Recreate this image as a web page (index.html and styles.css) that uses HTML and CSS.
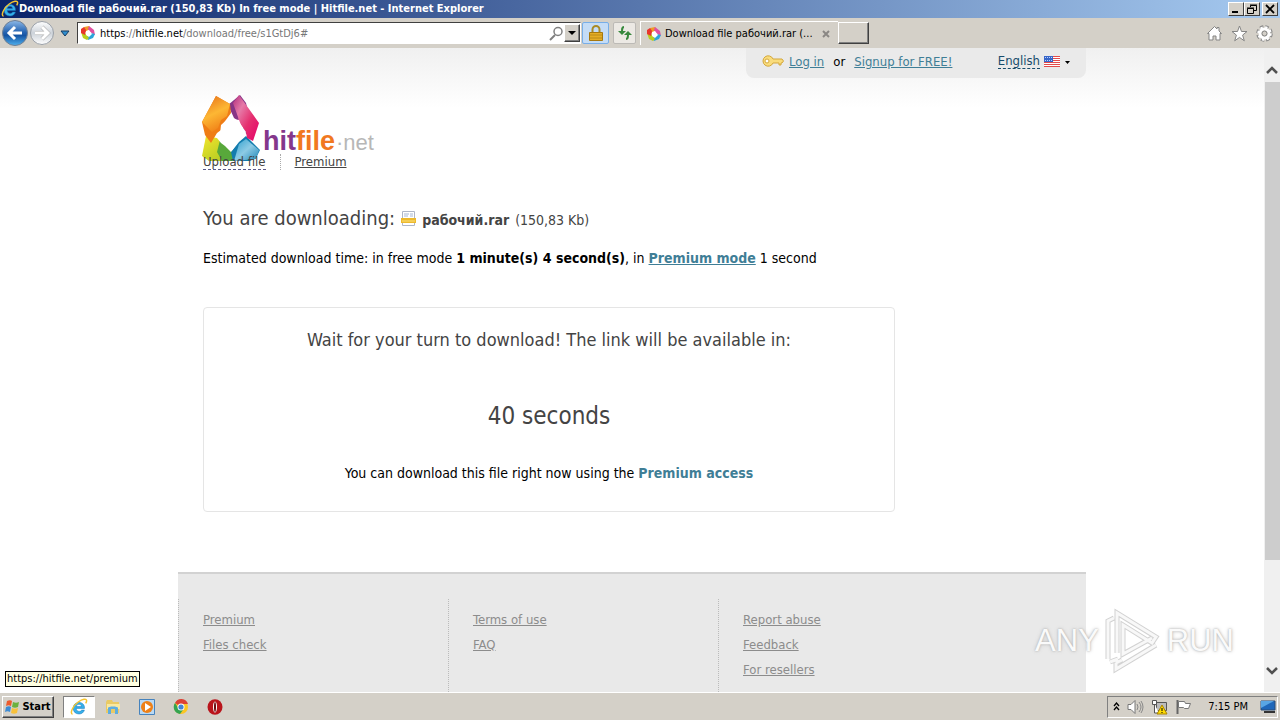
FILE: index.html
```html
<!DOCTYPE html>
<html lang="en">
<head>
  <meta charset="UTF-8">
  <title>Download file рабочий.rar (150,83 Kb) In free mode | Hitfile.net</title>
  <link rel="stylesheet" href="styles.css">
</head>
<body>
  <svg class="defs" aria-hidden="true">
    <defs>
      <linearGradient id="blue" x2="0" y2="1">
        <stop offset="0" stop-color="#8db9e8"/><stop offset=".45" stop-color="#2866b3"/><stop offset=".6" stop-color="#1454a3"/><stop offset="1" stop-color="#4fb0ee"/>
      </linearGradient>
      <linearGradient id="silver" x2="0" y2="1">
        <stop offset="0" stop-color="#fff"/><stop offset=".5" stop-color="#ccd2d9"/><stop offset="1" stop-color="#fff"/>
      </linearGradient>
      <linearGradient id="orange" x1=".2" x2=".6" y2="1">
        <stop offset="0" stop-color="#e8741c"/><stop offset=".5" stop-color="#fdb734"/><stop offset="1" stop-color="#ef7d15"/>
      </linearGradient>
      <linearGradient id="pink" x2="1" y2="1">
        <stop offset="0" stop-color="#b02c7c"/><stop offset=".3" stop-color="#e67aa8"/><stop offset=".6" stop-color="#e5306f"/><stop offset="1" stop-color="#e5006a"/>
      </linearGradient>
      <linearGradient id="sky" x2="1" y2="1">
        <stop offset="0" stop-color="#2e9fce"/><stop offset=".5" stop-color="#8dcbe5"/><stop offset="1" stop-color="#1f86b8"/>
      </linearGradient>
      <linearGradient id="lime" x2="1" y2="1">
        <stop offset="0" stop-color="#f4e62d"/><stop offset="1" stop-color="#a4c520"/>
      </linearGradient>
    </defs>
    <symbol id="ie" viewBox="0 0 18 18">
      <path d="M14.5 10.4H6.2c.2 2 1.3 3 3 3 1.2 0 2-.5 2.5-1.3h2.7C13.600 14.600 11.700 16 9 16c-3.500 0-5.800-2.300-5.800-5.700C3.200 6.900 5.600 4.500 9 4.500c3.600 0 5.700 2.400 5.500 5.900zM6.300 8.600h5.200C11.300 7 10.400 6.300 9 6.300 7.500 6.300 6.600 7.100 6.300 8.600z" fill="#35b0ea" stroke="#1473b9" stroke-width=".5"/>
      <path d="M2.500 16.200C-.5 15.500 2.800 7.800 8.200 4c4.300-3 8.200-3.600 8.400-1.500.1.800-.3 1.900-.9 2.800" fill="none" stroke="#f5c431" stroke-width="1.500"/>
    </symbol>
    <symbol id="hit" viewBox="0 0 16 16">
      <path d="M4 2l5-1 2 3-6 3z" fill="#ef9a28"/>
      <path d="M9 1l5 4 1 5-5-3-2-3z" fill="#e04fa0"/>
      <path d="M15 9l-2 4-5 2-2-3 5-4z" fill="#2ba4d9"/>
      <path d="M1 7l4 1 4 5-2 2-4-2z" fill="#b9ce1e"/>
      <path d="M1 4l3-2 2 3-1 5-4-2z" fill="#e8352c"/>
      <path d="M6 6l3-1 3 4-3 3-3-2z" fill="#fff"/>
    </symbol>
  </svg>

  <header class="titlebar">
    <svg class="icon18"><use href="#ie"/></svg>
    <h1>Download file рабочий.rar (150,83 Kb) In free mode | Hitfile.net - Internet Explorer</h1>
    <div class="window-buttons">
      <button type="button" aria-label="Minimize"><svg width="12" height="10"><path d="M2 7h6v2H2z"/></svg></button>
      <button type="button" aria-label="Restore"><svg width="12" height="10"><path d="M4.500 3V1.500h6v5H8M4 1h7" fill="none" stroke="#000"/><path d="M1.500 4.500h6v5h-6zM1 4h7" fill="none" stroke="#000"/></svg></button>
      <button type="button" aria-label="Close" class="close"><svg width="12" height="10"><path d="M2 1l8 8M10 1L2 9" stroke="#000" stroke-width="1.800"/></svg></button>
    </div>
  </header>

  <div class="toolbar">
    <button type="button" class="plain" aria-label="Back">
      <svg width="28" height="28" viewBox="0 0 28 28"><circle cx="14" cy="14" r="12.500" fill="url(#blue)" stroke="#6f7f93"/><path d="M21 14H9M14 8l-6 6 6 6" fill="none" stroke="#fff" stroke-width="3"/></svg>
    </button>
    <button type="button" class="plain" aria-label="Forward">
      <svg width="26" height="28" viewBox="0 0 26 28"><circle cx="13" cy="14" r="11.500" fill="url(#silver)" stroke="#9aa0a8"/><path d="M6 14h12M13 8l6 6-6 6" fill="none" stroke="#aaa" stroke-width="4"/><path d="M6 14h12M13 8l6 6-6 6" fill="none" stroke="#fff" stroke-width="3"/></svg>
    </button>
    <button type="button" class="plain history" aria-label="Recent pages">
      <svg width="10" height="7"><path d="M1 1h8L5 6z" fill="#2f8fd0" stroke="#173b60"/></svg>
    </button>
    <div class="address">
      <svg class="icon16"><use href="#hit"/></svg>
      <a class="url" href="#"><b>https</b>://<b>hitfile.net</b>/download/free/s1GtDj6#</a>
      <button type="button" class="plain" aria-label="Search"><svg width="15" height="15"><circle cx="9" cy="5.500" r="4" fill="none" stroke="#808080" stroke-width="1.500"/><path d="M6 9l-5 5" stroke="#808080" stroke-width="2"/></svg></button>
      <button type="button" class="raised drop" aria-label="Show addresses"><svg width="8" height="4"><path d="M0 0h8L4 4z"/></svg></button>
    </div>
    <button type="button" class="tool lock" aria-label="Security report">
      <svg width="14" height="17"><path d="M3.500 8V4.500a3.500 3.500 0 0 1 7 0V8" fill="none" stroke="#a98b26" stroke-width="2"/><path d="M.5 7.500h13v8H.5z" fill="#e5ad25" stroke="#a6780f"/><path d="M1 10h12M1 13h12" stroke="#b98a19"/></svg>
    </button>
    <button type="button" class="tool" aria-label="Refresh">
      <svg width="14" height="14"><path d="M6 1C4 1 4 3 4 6M8 13c2 0 2-2 2-5" fill="none" stroke="#37893d" stroke-width="2"/><path d="M0 5h8L4 9zM6 9h8l-4-4z" fill="#37893d"/></svg>
    </button>
    <div class="tab">
      <svg class="icon16"><use href="#hit"/></svg>
      <span>Download file рабочий.rar (...</span>
      <button type="button" class="plain" aria-label="Close tab"><svg width="8" height="8"><path d="M1 1l6 6M7 1L1 7" stroke="#8a8784" stroke-width="2"/></svg></button>
    </div>
    <button type="button" class="raised new-tab" aria-label="New tab"></button>
    <div class="commands">
      <button type="button" class="plain" aria-label="Home"><svg width="17" height="17"><path d="M1.500 8.500l7-7 2.500 2.500V2.500h2V6l2.500 2.500H14v6.500h-4v-4H7v4H3V8.500z" fill="#fff" stroke="#858585"/></svg></button>
      <button type="button" class="plain" aria-label="Favorites"><svg width="17" height="17"><path d="M8.500 1l2 5.500h5.500l-4.400 3.600 1.700 5.700-4.800-3.400-4.800 3.400 1.700-5.700L1 6.500h5.500z" fill="#fff" stroke="#858585"/></svg></button>
      <button type="button" class="plain" aria-label="Tools"><svg width="17" height="17"><circle cx="8.500" cy="8.500" r="6.500" fill="none" stroke="#858585" stroke-width="3.500" stroke-dasharray="3.200 1.900"/><circle cx="8.500" cy="8.500" r="6" fill="none" stroke="#fff" stroke-width="2.500" stroke-dasharray="2.300 2.400"/><circle cx="8.500" cy="8.500" r="4.500" fill="#d4d0c8" stroke="#fff" stroke-width="3"/><circle cx="8.500" cy="8.500" r="2.500" fill="#d4d0c8" stroke="#858585"/></svg></button>
    </div>
  </div>

  <div class="viewport">
    <div class="page">
      <div class="account">
        <svg width="22" height="12" viewBox="0 0 22 12"><path d="M11 4h9l1.500 2-1.500 2h-1v2h-2V8h-6a5.200 5.200 0 1 1 0-4z" fill="#f9dc7c" stroke="#d3a73c"/><circle cx="5" cy="6" r="2" fill="#fff" stroke="#d3a73c"/></svg>
        <a href="#">Log in</a>
        <span class="or">or</span>
        <a href="#">Signup for FREE!</a>
        <a class="language" href="#">English</a>
        <svg width="16" height="11"><path fill="#fff" d="M0 0h16v11H0z"/><path d="M0 .5h16M0 2.500h16M0 4.500h16M0 6.500h16M0 8.500h16M0 10.500h16" stroke="#e34b4b"/><path fill="#3766c8" d="M0 0h9v6H0z"/><path d="M1 1.500h7M1 4.500h7" stroke="#bcd0ff" stroke-dasharray="1 1"/></svg>
        <svg class="caret" width="5" height="3"><path d="M0 0h5L2.500 3z"/></svg>
      </div>

      <main>
        <a class="logo" href="#" aria-label="hitfile.net">
          <svg width="176" height="68" viewBox="0 0 176 68">
            <path d="M4 42l16 3 12 13v9H7l-7-5z" fill="url(#lime)"/>
            <path d="M18 46l5 1 2 4 7 8v8H20l-5-9z" fill="#58a83b"/>
            <path d="M44 42l14 14-4 8-6 3H31l-2-9 8-10z" fill="#137cae"/>
            <path d="M44 45l13 11-3 9-22 2 5-17z" fill="url(#sky)"/>
            <path d="M26 11l6-5 6-5 6 8 8 34-3 2-8-9v-6l-9-6z" fill="#873486"/>
            <path d="M37 1l20 28-6 18-6-3-1-6-7-10-1-5-5-14z" fill="url(#pink)"/>
            <path d="M14 2l14 8 1 9-8 11-2 6-4 3-6 10-6-8-3-13z" fill="#ef7d15"/>
            <path d="M14 2l14 8-3 12-6 4-3 8-6 4L0 28z" fill="url(#orange)"/>
            <path d="M28 23l3 2 6 1 2 5 5 7-3 6-4 3-8 11-6-6-4-3-4-5 3-4 1-9z" fill="#fff"/>
            <text class="logo-name" x="61" y="56" fill="#84378c">hit<tspan fill="#f17820">file</tspan></text>
            <text class="logo-net" x="134" y="56" fill="#b7b7b7">·net</text>
          </svg>
        </a>
        <nav>
          <a class="dashed" href="#">Upload file</a>
          <a href="#">Premium</a>
        </nav>

        <h2>
          You are downloading:
          <svg width="15" height="16"><path d="M1.500.5h12v14h-12z" fill="#fff" stroke="#aeb6c8"/><path d="M3 3h5M3 5h4M9 3h3M9 5h3" stroke="#a5b7d4"/><path d="M0 7h15v5H0z" fill="#edb92d"/><path d="M1 10h13" stroke="#fbe27e"/></svg>
          <b>рабочий.rar</b> <span>(150,83 Kb)</span>
        </h2>
        <p class="estimate">Estimated download time: in free mode <b>1 minute(s) 4 second(s)</b>, in <a href="#">Premium mode</a> 1 second</p>

        <section class="wait">
          <h3>Wait for your turn to download! The link will be available in:</h3>
          <div class="countdown">40 seconds</div>
          <p>You can download this file right now using the <a href="#">Premium access</a></p>
        </section>
      </main>

      <footer>
        <ul>
          <li><a href="#">Premium</a></li>
          <li><a href="#">Files check</a></li>
        </ul>
        <ul>
          <li><a href="#">Terms of use</a></li>
          <li><a href="#">FAQ</a></li>
        </ul>
        <ul>
          <li><a href="#">Report abuse</a></li>
          <li><a href="#">Feedback</a></li>
          <li><a href="#">For resellers</a></li>
        </ul>
      </footer>
    </div>

    <div class="scrollbar">
      <button type="button" class="plain" aria-label="Scroll up"><svg width="12" height="9"><path d="M1 7l5-5 5 5" fill="none" stroke="#505050" stroke-width="2.500"/></svg></button>
      <div class="track"><div class="thumb"></div></div>
      <button type="button" class="plain" aria-label="Scroll down"><svg width="12" height="9"><path d="M1 2l5 5 5-5" fill="none" stroke="#505050" stroke-width="2.500"/></svg></button>
    </div>

    <div class="status">https://hitfile.net/premium</div>
    <div class="watermark">
      <span>ANY</span>
      <svg width="60" height="66" viewBox="0 0 60 66"><path d="M5 51V13l6-3M14 45V5l39 24-4 6-29-18v29l29-16M7 54l8-3M13 55v6l40-24M13 55l6-3" fill="none" stroke="#d2d2d2" stroke-width="5"/><path d="M5 51V13l6-3M14 45V5l39 24-4 6-29-18v29l29-16M7 54l8-3M13 55v6l40-24M13 55l6-3" fill="none" stroke="#f8f8f8" stroke-width="3"/></svg>
      <span>RUN</span>
    </div>
  </div>

  <footer class="taskbar">
    <button type="button" class="raised start">
      <svg width="16" height="15"><path d="M2 2c2-1 4-1 5 0L6 7C4 6 3 6 1 7z" fill="#ed5b2c"/><path d="M8 3c2 1 4 1 6 0l-1 5c-2 1-4 1-6 0z" fill="#6bb13e"/><path d="M1 8c2-1 4-1 5 0l-1 5c-2-1-3-1-5 0z" fill="#3d8bd3"/><path d="M7 9c2 1 4 1 6 0l-1 5c-2 1-4 1-6 0z" fill="#f8c13a"/></svg>
      Start
    </button>
    <button type="button" class="task active" aria-label="Internet Explorer"><svg class="icon18"><use href="#ie"/></svg></button>
    <button type="button" class="task" aria-label="Explorer"><svg width="16" height="16"><path d="M1 3l1-2h5l1 2h6v11H1z" fill="#e9ca65"/><path d="M2 5h13v5H2z" fill="#f8e8a0"/><path d="M3 15V9c0-2 10-2 10 0v6h-3v-5H6v5z" fill="#5eade0"/></svg></button>
    <button type="button" class="task" aria-label="Media Player"><svg width="16" height="16"><path d="M.5.500h15v15H.5z" fill="#b9d9f4" stroke="#4683bd"/><circle cx="8" cy="8" r="6" fill="#ee8017"/><path d="M6 4l6 4-6 4z" fill="#fff"/></svg></button>
    <button type="button" class="task" aria-label="Chrome"><svg width="16" height="16"><circle cx="8" cy="8" r="7" fill="#fbc623"/><path d="M8 8L2 4a7 7 0 0 1 13 1H8z" fill="#dc4236"/><path d="M2 4l4 6 4 1-3 4A7 7 0 0 1 2 4z" fill="#35a451"/><circle cx="8" cy="8" r="3.500" fill="#fff"/><circle cx="8" cy="8" r="2.600" fill="#4285d5"/></svg></button>
    <button type="button" class="task" aria-label="Opera"><svg width="16" height="16"><ellipse cx="8" cy="8" rx="7.500" ry="7.800" fill="#b9141b"/><ellipse cx="8" cy="8" rx="2" ry="5.500" fill="#fff"/><ellipse cx="8" cy="8" rx="1" ry="5" fill="#690c10"/></svg></button>
    <div class="tray">
      <svg width="7" height="9"><path d="M1 4l2.500-3L6 4M1 8l2.500-3L6 8" fill="none" stroke="#000" stroke-width="1.300"/></svg>
      <svg width="17" height="16"><path d="M1 5.500h3l4-4v13l-4-4H1z" fill="#fff" stroke="#777"/><path d="M10 5q2 3 0 6M12 3q4 5 0 10M14 2q4 6 0 12" fill="none" stroke="#888"/></svg>
      <svg width="17" height="16"><path d="M5.500 3.500h10v8h-10z" fill="#bbb" stroke="#555"/><path d="M1.500 1.500h4v4h-4zM3.500 5v9H8" fill="#fff" stroke="#555"/><path d="M11 6l5 9H6z" fill="#ffdc00" stroke="#a98300"/><path d="M11 9v3M11 13v1" stroke="#000"/></svg>
      <svg width="17" height="16"><path d="M2.500 1v14" stroke="#666" stroke-width="2"/><path d="M3.500 2.500h6l1 2h5l-2 5h-4l-1-1h-5z" fill="#fff" stroke="#777"/></svg>
      <time>7:15 PM</time>
      <svg width="16" height="14"><path d="M1 1h14v9H1z" fill="#1f67b9" stroke="#2b4d77"/><path d="M1 1h13L1 8z" fill="#59a6e4"/><path d="M4 12h11" stroke="#333" stroke-width="2"/></svg>
    </div>
  </footer>
</body>
</html>
```

FILE: styles.css
```css
* {
  box-sizing: border-box;
}

body {
  margin: 0;
  height: 100vh;
  display: flex;
  flex-direction: column;
  overflow: hidden;
  background: #fff;
  color: #000;
  font-family: Tahoma, "DejaVu Sans Condensed", "Noto Sans", sans-serif;
  font-size: 14px;
}

h1, h2, h3, p, ul {
  margin: 0;
  padding: 0;
  font-weight: normal;
}

svg {
  display: block;
  flex: none;
}

button {
  display: flex;
  align-items: center;
  justify-content: center;
  padding: 0;
  font: inherit;
}

.defs {
  width: 0;
  height: 0;
  position: absolute;
}

.icon16 {
  width: 16px;
  height: 16px;
}

.icon18 {
  width: 18px;
  height: 18px;
}

.plain {
  border: 0;
  background: none;
}

.raised {
  background: #d4d0c8;
  border: 1px solid;
  border-color: #fff #404040 #404040 #fff;
  box-shadow: inset -1px -1px #808080;
}

/* browser window */
.titlebar {
  height: 18px;
  flex: none;
  display: flex;
  align-items: center;
  background: linear-gradient(90deg, #0a246a, #a6caf0);
  padding: 0 2px 0 1px;
  color: #fff;
}

.titlebar h1 {
  font-size: 11px;
  font-weight: bold;
  line-height: 16px;
}

.window-buttons {
  display: flex;
  margin-left: auto;
}

.window-buttons button {
  width: 16px;
  height: 14px;
  background: #d4d0c8;
  border: 1px solid;
  border-color: #fff #404040 #404040 #fff;
}

.window-buttons .close {
  margin-left: 2px;
}

.toolbar {
  height: 30px;
  flex: none;
  display: flex;
  align-items: center;
  background: #d4d0c8;
  padding: 0 7px 0 1px;
  font-size: 11px;
}

.history {
  width: 20px;
  height: 22px;
  margin-right: 2px;
}

.address {
  width: 504px;
  height: 22px;
  display: flex;
  align-items: center;
  background: #fff;
  border: 1px solid;
  border-color: #404040 #fff #fff #404040;
  padding-left: 2px;
}

.url {
  flex: 1;
  margin-left: 4px;
  color: #777;
  text-decoration: none;
}

.url b {
  color: #000;
  font-weight: normal;
}

.drop {
  width: 16px;
  height: 18px;
}

.tool {
  width: 23px;
  height: 22px;
  margin: 0 4px 0 3px;
  border: 1px solid #bcbab6;
  border-radius: 2px;
  background: #ece9e4;
}

.lock {
  width: 27px;
  margin: 0 1px;
  border-color: #77aee8;
  background: #c4dcf6;
}

.tab {
  width: 198px;
  height: 24px;
  display: flex;
  align-items: center;
  gap: 3px;
  border-top: 1px solid #fff;
  border-left: 1px solid #fff;
  padding: 0 8px 0 5px;
}

.tab button {
  margin-left: auto;
}

.new-tab {
  width: 31px;
  height: 22px;
}

.commands {
  display: flex;
  gap: 8px;
  margin-left: auto;
}

.viewport {
  flex: 1;
  min-height: 0;
  display: flex;
  position: relative;
  background: linear-gradient(#f0f0f0, #fff 60px);
}

.page {
  flex: 1;
  overflow: hidden;
  display: flex;
  flex-direction: column;
  align-items: center;
}

.page > * {
  width: 908px;
  max-width: 100%;
}

.page > .account {
  width: 340px;
  height: 30px;
  margin-left: 568px;
  flex: none;
  display: flex;
  align-items: center;
  background: #eaeaea;
  border-radius: 0 0 8px 8px;
  padding: 0 16px 4px;
  font-size: 13px;
}

.account a {
  color: #3f7e96;
  margin-left: 5px;
}

.or {
  margin: 0 4px 0 9px;
}

.account .language {
  margin: 0 4px 0 auto;
  color: #174b6b;
  text-decoration: none;
  border-bottom: 1px dashed #174b6b;
  line-height: 15px;
}

.caret {
  margin: 2px 0 0 5px;
}

/* download page */
main {
  padding: 16px 24px 0;
  flex: none;
}

.logo {
  display: block;
  width: 176px;
}

.logo-name {
  font: bold 27px "Liberation Sans", sans-serif;
}

.logo-net {
  font: 22px "Liberation Sans", sans-serif;
}

nav {
  display: flex;
  margin: -8px 0 0 1px;
  font-size: 13px;
  line-height: 15px;
}

nav a {
  color: #444;
}

nav a + a {
  margin-left: 14px;
  padding-left: 14px;
  border-left: 1px dotted #aaa;
}

nav .dashed {
  text-decoration: none;
  border-bottom: 1px dashed #5c5c8c;
}

h2 {
  display: flex;
  align-items: baseline;
  margin: 34px 0 0 1px;
  color: #444;
  font-size: 20px;
  line-height: 28px;
}

h2 svg {
  align-self: center;
  margin: 0 6px;
}

h2 b,
h2 span {
  font-size: 14px;
}

h2 span {
  margin-left: 6px;
}

.estimate {
  margin: 14px 0 0 1px;
  line-height: 20px;
}

.estimate a,
.wait a {
  color: #3f7e96;
  font-weight: bold;
}

.wait {
  width: 692px;
  max-width: 100%;
  margin: 39px 0 60px 1px;
  border: 1px solid #e5e5e5;
  border-radius: 4px;
  padding: 20px 0 28px;
  text-align: center;
}

.wait h3 {
  color: #444;
  font-size: 18px;
  line-height: 24px;
}

.countdown {
  margin: 48px 0 32px;
  color: #444;
  font-size: 24px;
  line-height: 32px;
}

.wait p {
  line-height: 19px;
}

.wait a {
  text-decoration: none;
}

.page footer {
  flex: 1;
  display: grid;
  grid-template-columns: 270px 270px 1fr;
  background: #e9e9e9;
  border-top: 2px solid #d2d2d2;
  padding-top: 25px;
}

.page ul {
  list-style: none;
  border-left: 1px dotted #bbb;
  padding: 8px 0 0 24px;
  font-size: 13px;
  line-height: 25px;
}

.page ul a {
  color: #8c8c8c;
}

.scrollbar {
  width: 16px;
  display: flex;
  flex-direction: column;
  background: #f0f0f0;
}

.scrollbar button {
  height: 34px;
  padding-top: 10px;
}

.scrollbar button:last-child {
  padding: 0 0 10px;
}

.track {
  flex: 1;
}

.thumb {
  height: 83%;
  margin-left: 1px;
  background: #cdcdcd;
}

.status {
  position: absolute;
  left: 5px;
  bottom: 5px;
  border: 1px solid #000;
  background: #ffffe1;
  padding: 0 1px;
  font-size: 11px;
  line-height: 14px;
}

.watermark {
  position: absolute;
  right: 46px;
  bottom: 18px;
  display: flex;
  align-items: center;
  gap: 4px;
  color: #fafafa;
  font: 31px "Liberation Sans", sans-serif;
  text-shadow: 0 0 2px #aaa, 0 0 4px #ccc;
}

/* desktop taskbar */
.taskbar {
  height: 28px;
  flex: none;
  display: flex;
  align-items: center;
  background: #d4d0c8;
  border-top: 1px solid #fff;
  padding: 0 2px;
  font-size: 11px;
}

.start {
  width: 52px;
  height: 22px;
  gap: 1px;
  margin-right: 9px;
  font-weight: bold;
}

.task {
  width: 32px;
  height: 22px;
  margin-right: 2px;
  border: 1px solid transparent;
  background: none;
}

.active {
  border-color: #808080 #fff #fff #808080;
  background: #fff;
}

.tray {
  height: 22px;
  display: flex;
  align-items: center;
  gap: 7px;
  margin-left: auto;
  border: 1px solid;
  border-color: #808080 #fff #fff #808080;
  padding: 0 1px 0 5px;
}

.tray time {
  margin: 0 5px 0 9px;
}
```
